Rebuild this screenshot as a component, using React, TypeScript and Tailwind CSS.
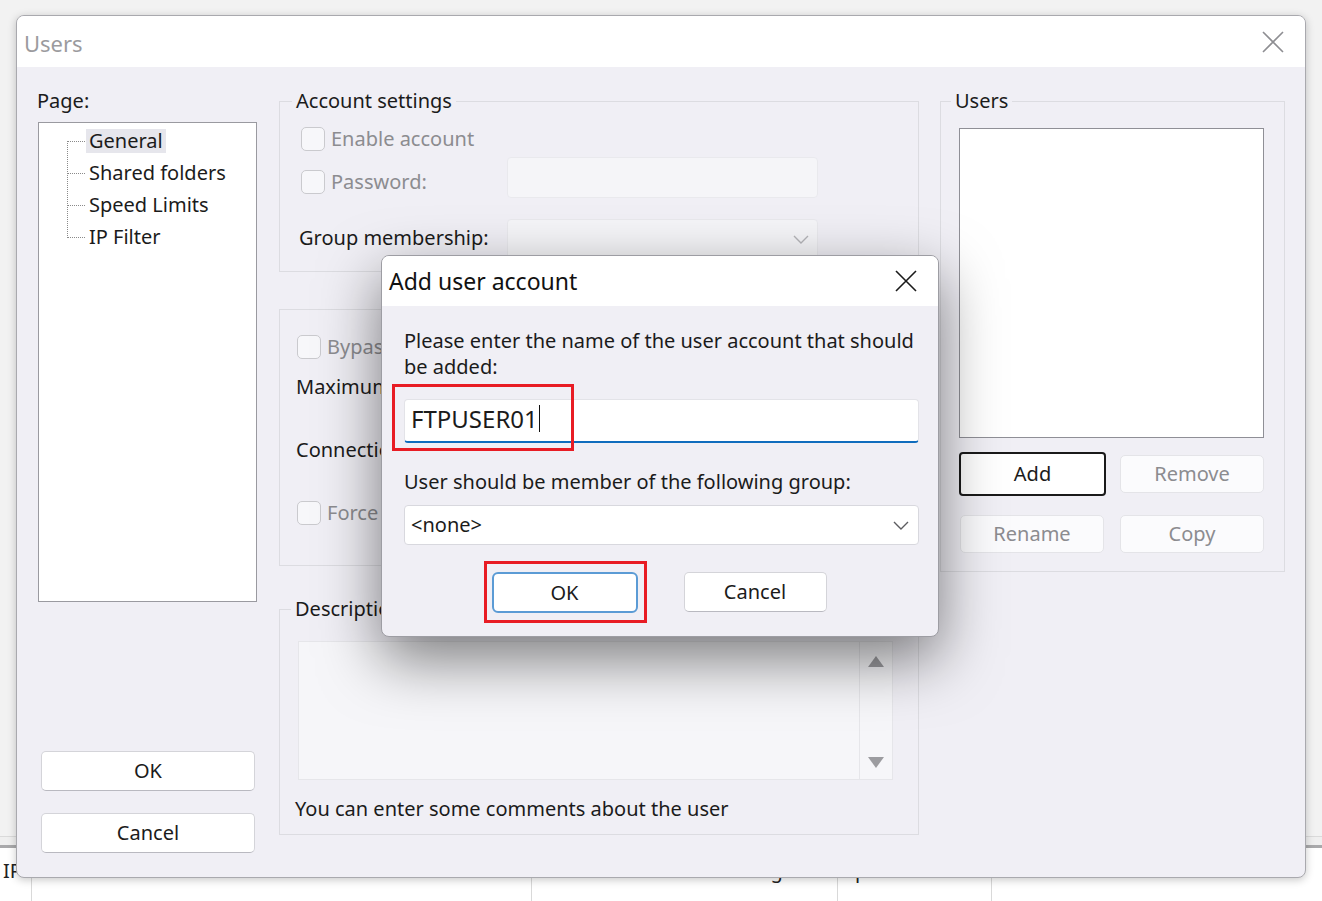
import React from 'react';

// Windows-style "Users" dialog with the "Add user account" prompt on top

function Checkbox() {
  return <span className="block w-[24px] h-[24px] shrink-0 rounded-[5px] border border-[#cacace] bg-[#f7f7fa]" />;
}

function CloseIcon({ color, size = 22 }: { color: string; size?: number }) {
  return (
    <svg width={size} height={size} viewBox="0 0 22 22" fill="none">
      <path d="M1 1L21 21M21 1L1 21" stroke={color} strokeWidth="1.6" />
    </svg>
  );
}

function Chevron({ color }: { color: string }) {
  return (
    <svg width="16" height="9" viewBox="0 0 16 9" fill="none">
      <path d="M1 1L8 8L15 1" stroke={color} strokeWidth="1.4" />
    </svg>
  );
}

function WinButton({
  children,
  disabled,
  className = '',
}: {
  children: React.ReactNode;
  disabled?: boolean;
  className?: string;
}) {
  return (
    <div
      className={`flex items-center justify-center rounded-[5px] ${
        disabled
          ? 'bg-[#fbfbfd] border border-[#e4e4e8] text-[#8c8c90]'
          : 'bg-white border border-[#d4d4d9] border-b-[#b9b9c0] text-[#1b1b1b]'
      } ${className}`}
    >
      {children}
    </div>
  );
}

function PageTree() {
  const items = ['General', 'Shared folders', 'Speed Limits', 'IP Filter'];
  return (
    <div className="mt-[9px] ml-[1px] h-[480px] border border-[#9a9aa0] bg-white pt-[2px]">
      <div className="flex">
        <svg width="19" height="113" className="ml-[28px] shrink-0" viewBox="0 0 19 113">
          <path d="M0.5 16V113" stroke="#8a8a8a" strokeDasharray="1 1" />
          <path d="M1 16.5H19M1 48.5H19M1 80.5H19M1 112.5H19" stroke="#8a8a8a" strokeDasharray="1 1" />
        </svg>
        <div className="flex flex-col">
          {items.map((t, i) => (
            <div key={t} className="h-[32px] flex items-center">
              <span className={`px-[3px] leading-[24px] ${i === 0 ? 'bg-[#e6e6ec]' : ''}`}>{t}</span>
            </div>
          ))}
        </div>
      </div>
    </div>
  );
}

function AccountSettings() {
  return (
    <fieldset className="border border-[#dcdce1] pl-[21px] pb-[11px]">
      <legend className="ml-[-9px] px-[4px] leading-[24px]">Account settings</legend>
      <div className="mt-[14px] flex items-center gap-[6px] h-[24px]">
        <Checkbox />
        <span className="text-[#8c8c90]">Enable account</span>
      </div>
      <div className="mt-[6px] flex items-start h-[41px]">
        <div className="w-[206px] mt-[13px] flex items-center gap-[6px] h-[24px]">
          <Checkbox />
          <span className="text-[#8c8c90]">Password:</span>
        </div>
        <div className="w-[311px] h-[41px] rounded-[4px] border border-[#e9e9ed] bg-[#f5f5f8]" />
      </div>
      <div className="mt-[21px] flex items-center h-[41px]">
        <span className="w-[206px] ml-[-2px] pb-[3px]">Group membership:</span>
        <div className="ml-[2px] w-[311px] h-[41px] rounded-[4px] border border-[#e9e9ed] bg-[#f5f5f8] flex items-center justify-end pr-[8px]">
          <Chevron color="#b4b4b8" />
        </div>
      </div>
    </fieldset>
  );
}

function ConnectionSettings() {
  // only the left edge of this group peeks out from under the prompt
  return (
    <fieldset className="mt-[37px] h-[257px] border border-[#dcdce1] pl-[16px] pt-[25px]">
      <div className="flex items-center gap-[6px] h-[24px] ml-[1px]">
        <Checkbox />
        <span className="text-[#8c8c90]">Bypass userlimit of server</span>
      </div>
      <div className="mt-[7px] h-[41px] flex items-center">Maximum connection count:</div>
      <div className="mt-[22px] h-[41px] flex items-center">Connection limit per IP:</div>
      <div className="mt-[31px] flex items-center gap-[6px] h-[24px] ml-[1px]">
        <Checkbox />
        <span className="text-[#8c8c90]">Force SSL for user login</span>
      </div>
    </fieldset>
  );
}

function Description() {
  return (
    <fieldset className="mt-[31px] border border-[#dcdce1] pl-[18px] pb-[13px]">
      <legend className="ml-[-7px] px-[4px] leading-[24px]">Description</legend>
      <div className="mt-[20px] w-[595px] h-[139px] border border-[#e6e6ea] bg-[#f6f6f9] flex justify-end">
        <div className="w-[33px] border-l border-[#e6e6ea] flex flex-col items-center justify-between pt-[14px] pb-[11px]">
          <svg width="16" height="11" viewBox="0 0 16 11">
            <path d="M8 0L16 11H0Z" fill="#9c9ca0" />
          </svg>
          <svg width="16" height="11" viewBox="0 0 16 11">
            <path d="M0 0H16L8 11Z" fill="#9c9ca0" />
          </svg>
        </div>
      </div>
      <div className="mt-[17px] ml-[-3px] leading-[24px]">You can enter some comments about the user</div>
    </fieldset>
  );
}

function UsersBox() {
  return (
    <fieldset className="border border-[#dcdce1] pl-[18px] pb-[18px]">
      <legend className="ml-[-8px] px-[4px] leading-[24px]">Users</legend>
      <div className="mt-[15px] w-[305px] h-[310px] border border-[#8f8f96] bg-white" />
      <div className="mt-[14px] grid grid-cols-[147px_144px] gap-x-[14px]">
        <div className="h-[44px] flex items-center">
          <div className="w-[147px] h-[44px] rounded-[4px] border-2 border-[#1a1a1a] bg-white flex items-center justify-center">
            Add
          </div>
        </div>
        <div className="h-[44px] flex items-center">
          <WinButton disabled className="w-[144px] h-[38px]">Remove</WinButton>
        </div>
        <div className="mt-[19px]">
          <WinButton disabled className="ml-[1px] w-[144px] h-[38px]">Rename</WinButton>
        </div>
        <div className="mt-[19px]">
          <WinButton disabled className="w-[144px] h-[38px]">Copy</WinButton>
        </div>
      </div>
    </fieldset>
  );
}

function AddUserDialog() {
  return (
    <div className="absolute left-[381px] top-[255px] w-[558px] h-[382px] rounded-[8px] border border-[#9d9da3] bg-[#f0eff5] shadow-[0_22px_60px_rgba(0,0,0,0.5)] overflow-hidden">
      <div className="h-[50px] bg-white flex items-center justify-between pl-[7px] pr-[21px]">
        <span className="text-[23px] text-[#111]">Add user account</span>
        <CloseIcon color="#1a1a1a" />
      </div>
      <div className="pl-[22px] pr-[19px] pt-[22px]">
        <div className="leading-[26px] whitespace-nowrap">
          Please enter the name of the user account that should
          <br />
          be added:
        </div>
        <div className="mt-[19px] h-[44px] bg-white rounded-[4px] border border-[#e3e3e8] border-b-2 border-b-[#0f6cbd] flex items-center pl-[6px] pb-[4px]">
          <span className="text-[24px] leading-[28px]">FTPUSER01</span>
          <span className="ml-[1px] w-[1.5px] h-[27px] bg-[#111]" />
        </div>
        <div className="mt-[26px] leading-[26px]">User should be member of the following group:</div>
        <div className="mt-[10px] h-[40px] bg-white rounded-[4px] border border-[#d8d8de] flex items-center justify-between pl-[6px] pr-[9px]">
          <span>&lt;none&gt;</span>
          <Chevron color="#5c5c60" />
        </div>
        <div className="mt-[27px] ml-[-5px] flex justify-center gap-[46px]">
          <div className="w-[146px] h-[41px] rounded-[6px] border-2 border-[#5b9bd5] bg-white flex items-center justify-center">
            OK
          </div>
          <WinButton className="w-[143px] h-[40px]">Cancel</WinButton>
        </div>
      </div>
      {/* highlight markers */}
      <div className="absolute left-[10px] top-[128px] w-[182px] h-[67px] border-[3px] border-[#e81c24]" />
      <div className="absolute left-[102px] top-[305px] w-[163px] h-[62px] border-[3px] border-[#e81c24]" />
    </div>
  );
}

export default function App() {
  return (
    <div className="relative w-[1322px] h-[901px] overflow-hidden bg-[#f6f6f6] text-[20px] leading-[24px] text-[#1b1b1b] font-['Noto_Sans',sans-serif]">
      {/* main application window behind the dialogs */}
      <div className="flex flex-col h-full">
        <div className="flex-1 bg-[#f2f2f2]" />
        <div className="h-[1px] bg-[#dadada]" />
        <div className="h-[8px] bg-[#efefef]" />
        <div className="h-[3px] bg-[#a9a9ab]" />
        <div className="h-[53px] bg-white flex text-[#222]">
          <div className="w-[32px] border-r border-[#d9d9d9] pl-[3px] pt-[11px]">IP</div>
          <div className="w-[500px] border-r border-[#d9d9d9] pl-[14px] pt-[11px]">Transfer</div>
          <div className="w-[306px] border-r border-[#d9d9d9] pr-[16px] pt-[11px] text-right">Progress</div>
          <div className="w-[154px] border-r border-[#d9d9d9] pl-[6px] pt-[11px]">Speed</div>
          <div className="flex-1" />
        </div>
      </div>

      {/* Users dialog */}
      <div className="absolute left-[16px] top-[15px] w-[1290px] h-[863px] rounded-[8px] border border-[#a9a9ae] bg-[#f0eff5] shadow-[0_2px_8px_rgba(0,0,0,0.22)] overflow-hidden flex flex-col">
        <div className="h-[51px] shrink-0 bg-white flex items-center justify-between pl-[7px] pr-[21px]">
          <span className="text-[22px] text-[#9b9b9e] pt-[2px]">Users</span>
          <CloseIcon color="#8e8e92" />
        </div>
        <div className="flex-1 flex pl-[20px] pt-[22px] pb-[24px]">
          <div className="w-[220px] flex flex-col">
            <div className="h-[24px]">Page:</div>
            <PageTree />
            <div className="mt-auto ml-[4px] w-[214px]">
              <WinButton className="h-[40px]">OK</WinButton>
              <WinButton className="mt-[22px] h-[40px]">Cancel</WinButton>
            </div>
          </div>
          <div className="ml-[22px] w-[640px]">
            <AccountSettings />
            <ConnectionSettings />
            <Description />
          </div>
          <div className="ml-[21px] w-[345px]">
            <UsersBox />
          </div>
        </div>
      </div>

      <AddUserDialog />
    </div>
  );
}
